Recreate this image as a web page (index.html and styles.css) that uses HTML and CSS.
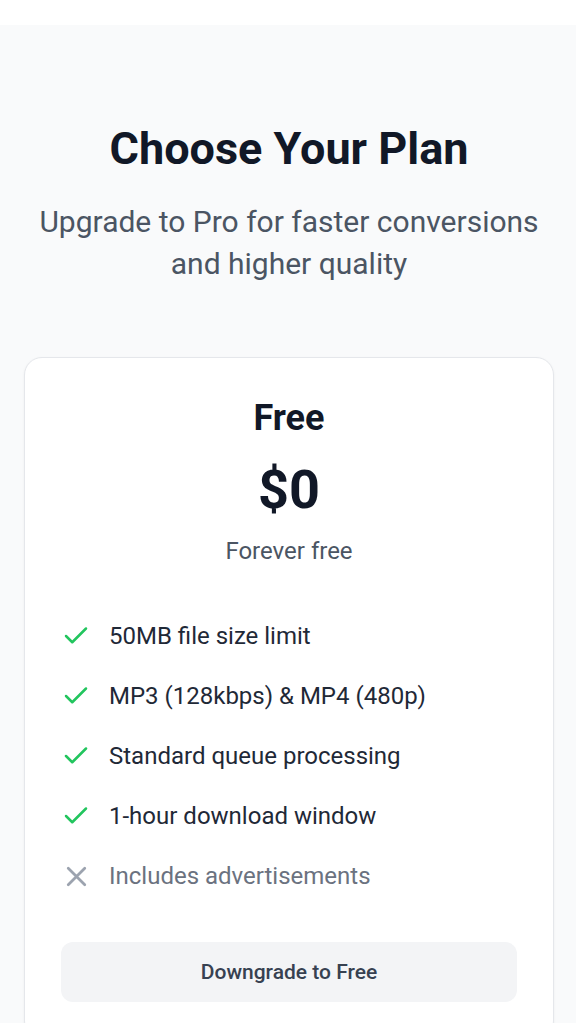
FILE: index.html
```html
<!DOCTYPE html>
<html lang="en">
<head>
  <meta charset="UTF-8">
  <meta name="viewport" content="width=device-width, initial-scale=1.0">
  <title>Choose Your Plan</title>
  <link rel="stylesheet" href="styles.css">
</head>
<body>
  <div class="topbar"></div>
  <section class="pricing">
    <h1 class="pricing-title">Choose Your Plan</h1>
    <p class="pricing-subtitle">Upgrade to Pro for faster conversions and higher quality</p>

    <div class="plan-card">
      <h2 class="plan-name">Free</h2>
      <div class="plan-price">$0</div>
      <p class="plan-note">Forever free</p>

      <ul class="feature-list">
        <li class="feature">
          <svg class="icon icon-check" viewBox="0 0 24 24"><path d="M20 6 9 17l-5-5"/></svg>
          <span>50MB file size limit</span>
        </li>
        <li class="feature">
          <svg class="icon icon-check" viewBox="0 0 24 24"><path d="M20 6 9 17l-5-5"/></svg>
          <span>MP3 (128kbps) &amp; MP4 (480p)</span>
        </li>
        <li class="feature">
          <svg class="icon icon-check" viewBox="0 0 24 24"><path d="M20 6 9 17l-5-5"/></svg>
          <span>Standard queue processing</span>
        </li>
        <li class="feature">
          <svg class="icon icon-check" viewBox="0 0 24 24"><path d="M20 6 9 17l-5-5"/></svg>
          <span>1-hour download window</span>
        </li>
        <li class="feature feature-off">
          <svg class="icon icon-x" viewBox="0 0 24 24"><path d="M18 6 6 18M6 6l12 12"/></svg>
          <span>Includes advertisements</span>
        </li>
      </ul>

      <button class="plan-button">Downgrade to Free</button>
    </div>
  </section>
</body>
</html>
```

FILE: styles.css
```css
* {
  box-sizing: border-box;
}
body {
  margin: 0;
  font-family: Roboto, "Liberation Sans", Arial, sans-serif;
  background-color: #fff;
}
.topbar {
  height: 25px;
  background-color: #fff;
}
.pricing {
  background-color: #f9fafb;
  padding: 97px 22px 40px 24px;
  min-height: 998px;
}
.pricing-title {
  margin: 0 0 25px;
  font-size: 45px;
  line-height: 54px;
  font-weight: 700;
  color: #111827;
  text-align: center;
}
.pricing-subtitle {
  margin: 0 auto 72px;
  max-width: 520px;
  font-size: 30px;
  line-height: 42px;
  color: #4b5563;
  text-align: center;
}
.plan-card {
  background-color: #fff;
  border: 1px solid #e5e7eb;
  border-radius: 18px;
  padding: 36px;
  box-shadow: 0 1px 3px rgba(0, 0, 0, 0.05);
}
.plan-name {
  margin: 0 0 18px;
  font-size: 36px;
  line-height: 48px;
  font-weight: 700;
  color: #111827;
  text-align: center;
}
.plan-price {
  margin-bottom: 13px;
  font-size: 54px;
  line-height: 60px;
  font-weight: 700;
  color: #111827;
  text-align: center;
}
.plan-note {
  margin: 0 0 49px;
  font-size: 24px;
  line-height: 36px;
  color: #4b5563;
  text-align: center;
}
.feature-list {
  list-style: none;
  margin: 0 0 48px;
  padding: 0;
  display: flex;
  flex-direction: column;
  gap: 24px;
}
.feature {
  display: flex;
  align-items: center;
  gap: 18px;
  font-size: 24px;
  line-height: 36px;
  color: #1f2937;
}
.feature-off {
  color: #6b7280;
}
.icon {
  width: 30px;
  height: 30px;
  flex-shrink: 0;
  fill: none;
  stroke-width: 2;
  stroke-linecap: round;
  stroke-linejoin: round;
}
.icon-check {
  stroke: #22c55e;
}
.icon-x {
  stroke: #9ca3af;
  width: 33px;
  height: 33px;
  margin: 0 -1.5px 0 -1.5px;
}
.plan-button {
  display: block;
  width: 100%;
  padding: 15px;
  border: none;
  border-radius: 12px;
  background-color: #f3f4f6;
  color: #374151;
  font-family: inherit;
  font-size: 21px;
  line-height: 30px;
  font-weight: 500;
  cursor: pointer;
}
```
